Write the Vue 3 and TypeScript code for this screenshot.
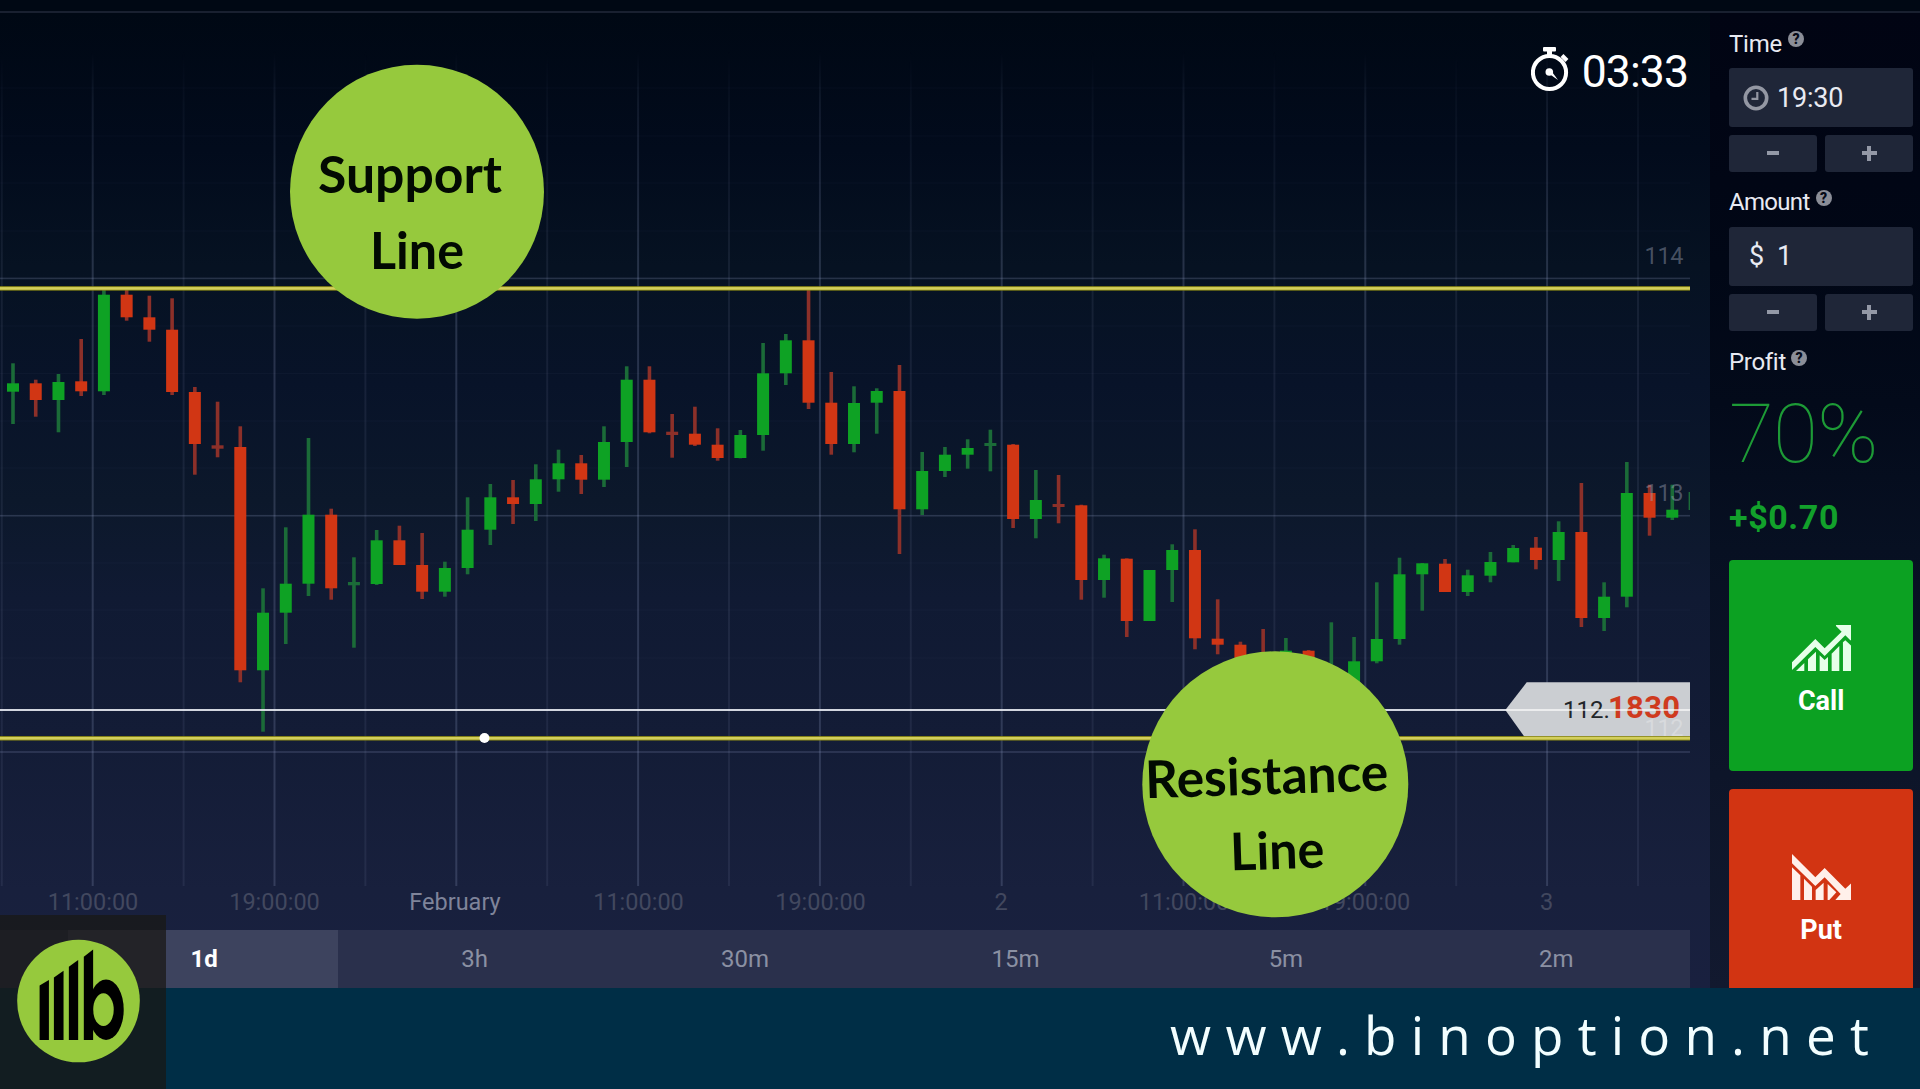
<template>
  <div class="screen">
    <div class="top-strip"></div>

    <div class="workspace">
      <!-- chart and timeframe tabs -->
      <section class="chart-column">
        <svg class="chart" viewBox="0 13 1710 917" width="1710" height="917" xmlns="http://www.w3.org/2000/svg">
          <defs>
            <linearGradient id="fade" x1="0" y1="50" x2="0" y2="260" gradientUnits="userSpaceOnUse">
              <stop offset="0" stop-color="#fff" stop-opacity="0" />
              <stop offset="0.25" stop-color="#fff" stop-opacity="0.45" />
              <stop offset="1" stop-color="#fff" stop-opacity="1" />
            </linearGradient>
            <mask id="grid-mask" maskUnits="userSpaceOnUse" x="0" y="13" width="1710" height="917">
              <rect x="0" y="13" width="1710" height="917" fill="url(#fade)" />
            </mask>
            <clipPath id="plot-clip">
              <rect x="0" y="13" width="1690" height="917" />
            </clipPath>
          </defs>

          <!-- grid -->
          <g mask="url(#grid-mask)">
            <rect v-for="x in minorX" :key="'mx' + x" :x="x - 1" y="50" width="2" height="836" class="grid-minor" />
            <rect v-for="x in majorX" :key="'x' + x" :x="x - 1" y="50" width="2" height="836" class="grid-major" />
          </g>
          <rect v-for="y in minorY" :key="'my' + y" x="0" :y="y - 0.5" width="1690" height="1" class="grid-faint" />
          <rect v-for="y in majorY" :key="'y' + y" x="0" :y="y - 0.8" width="1690" height="1.6" class="grid-major" />

          <!-- candles -->
          <g clip-path="url(#plot-clip)">
            <g v-for="(c, i) in candles" :key="i" :class="c[0] ? 'up' : 'down'">
              <rect class="wick" :x="candleX(i) - 1.8" :y="c[1]" width="3.6" :height="c[2] - c[1]" />
              <rect
                :class="c[4] - c[3] < 5 ? 'wick' : 'body'"
                :x="candleX(i) - 6"
                :y="c[3]"
                width="12"
                :height="c[4] - c[3]"
              />
            </g>
            <rect class="wick-last" x="1688.6" y="492" width="1.6" height="18" />
          </g>

          <!-- price scale -->
          <text x="1683" y="263.5" class="price-label">114</text>
          <text x="1683" y="500.5" class="price-label">113</text>

          <!-- time scale -->
          <text
            v-for="t in timeLabels"
            :key="t.x"
            :x="t.x"
            y="909.8"
            :class="['time-label', { strong: t.strong }]"
          >{{ t.text }}</text>

          <!-- current price -->
          <path d="M1505.3,710 L1526.7,682.3 H1690 V740 H1526.7 Z" fill="#cbced2" />
          <text x="1683" y="736" class="price-label ghost">112</text>
          <text x="1563" y="718.3" class="tag-int">112.</text>
          <text x="1608" y="718.3" class="tag-frac">1830</text>
          <rect x="0" y="709.1" width="1506" height="1.8" fill="#e8ebf2" />
          <rect x="1506" y="709.1" width="184" height="1.8" fill="#fff" fill-opacity="0.7" />

          <!-- levels -->
          <g v-for="y in levels" :key="'l' + y">
            <rect x="0" :y="y - 2.2" width="1690" height="4.4" fill="#8f8c14" />
            <rect x="0" :y="y - 1.3" width="1690" height="2.6" fill="#d3cf5c" />
          </g>
          <circle cx="484.5" cy="738" r="5" fill="#fff" />

          <!-- callouts -->
          <circle cx="417" cy="191.7" r="127" class="callout" />
          <text x="318" y="193" textLength="184" lengthAdjust="spacingAndGlyphs" class="callout-text">Support</text>
          <text x="370" y="269" textLength="94" lengthAdjust="spacingAndGlyphs" class="callout-text">Line</text>

          <circle cx="1275.3" cy="784.3" r="133" class="callout" />
          <g transform="rotate(-1.9 1275 800)">
            <text x="1146" y="794" textLength="243" lengthAdjust="spacingAndGlyphs" class="callout-text">Resistance</text>
            <text x="1228.5" y="869" textLength="94" lengthAdjust="spacingAndGlyphs" class="callout-text">Line</text>
          </g>
        </svg>

        <div class="timer">
          <svg class="timer-icon" viewBox="0 0 38 46" width="38" height="46">
            <circle cx="18.5" cy="26.5" r="16.6" fill="none" stroke="#fff" stroke-width="4" />
            <rect x="12" y="1" width="13" height="4.4" rx="1" fill="#fff" />
            <rect x="16" y="4" width="5" height="6" fill="#fff" />
            <path d="M31,9.5 L36,14.5" stroke="#fff" stroke-width="4" />
            <circle cx="18.3" cy="26" r="3.8" fill="#fff" />
            <path d="M17,27 L20,24.5 L27,34 Z" fill="#fff" />
          </svg>
          <span>03:33</span>
        </div>

        <nav class="tabs">
          <span class="tab-lead"></span>
          <button
            v-for="tab in tabs"
            :key="tab"
            :class="['tab', { active: tab === activeTab }]"
            @click="activeTab = tab"
          >{{ tab }}</button>
        </nav>
      </section>

      <!-- order panel -->
      <aside class="panel">
        <div class="label">Time<span class="help">?</span></div>
        <div class="field">
          <svg viewBox="0 0 26 26" width="26" height="26">
            <circle cx="13" cy="13" r="10.7" fill="none" stroke="#9397a3" stroke-width="3.6" />
            <path d="M14.3,7 V13.8 H8.5" fill="none" stroke="#9397a3" stroke-width="2.2" />
          </svg>
          <span class="time-value">{{ timeText }}</span>
        </div>
        <div class="steps">
          <button class="step" @click="minutes--"><i class="minus"></i></button>
          <button class="step" @click="minutes++"><i class="plus"></i></button>
        </div>

        <div class="label amount-label">Amount<span class="help">?</span></div>
        <div class="field money">
          <span>$</span>
          <span class="amount-value">{{ amount }}</span>
        </div>
        <div class="steps">
          <button class="step" @click="amount > 1 && amount--"><i class="minus"></i></button>
          <button class="step" @click="amount++"><i class="plus"></i></button>
        </div>

        <div class="label profit-label">Profit<span class="help">?</span></div>
        <div class="percent">{{ rate }}%</div>
        <div class="payout">+${{ payout }}</div>

        <button class="trade call">
          <svg viewBox="0 0 178 138" width="59.3" height="46" fill="#e6ffe9">
            <path d="M0,112 L70,42 L98,70 L149,20 L132,3 V0 H178 V46 H175 L160,31 L98,93 L70,66 L0,135 Z" />
            <path d="M12,138 L37,114 V138 Z" />
            <path d="M48,103 L72,80 V138 H48 Z" />
            <path d="M83,91 L98,105 L108,96 V138 H83 Z" />
            <path d="M119,86 L142,63 V138 H119 Z" />
            <path d="M153,52 L160,46 L178,62 V138 H153 Z" />
          </svg>
          <span>Call</span>
        </button>
        <button class="trade put">
          <svg viewBox="0 0 178 138" width="59.3" height="46" fill="#fff0ea">
            <path d="M0,0 L70,70 L98,42 L160,104 L178,88 V138 H130 L146,120 L98,70 L70,96 L0,28 Z" />
            <path d="M0,40 L25,64 V138 H0 Z" />
            <path d="M36,74 L60,98 V138 H36 Z" />
            <path d="M71,108 L95,86 V138 H71 Z" />
            <path d="M107,90 L133,115 L112,138 H107 Z" />
          </svg>
          <span>Put</span>
        </button>
      </aside>
    </div>

    <footer class="footer">www.binoption.net</footer>

    <div class="brand">
      <svg viewBox="0 0 370 372" width="123" height="124">
        <circle cx="185" cy="186" r="184.5" fill="#96c93d" />
        <ellipse cx="268" cy="212" rx="53" ry="91" fill="#000" />
        <ellipse cx="260" cy="212" rx="31" ry="49" fill="#96c93d" />
        <path d="M68,139 L96,123 V303 H68 Z" />
        <path d="M111,115 L140,95 V303 H111 Z" />
        <path d="M156,83 L184,63 V303 H156 Z" />
        <path d="M201,53 L229,31 V303 H201 Z" />
      </svg>
    </div>
  </div>
</template>

<script setup lang="ts">
import { ref, computed } from 'vue'

// [rising, high, low, body top, body bottom]
type Candle = [number, number, number, number, number]

const candles: Candle[] = [
  [1, 363.3, 424, 383.3, 391.7],
  [0, 379.7, 416.7, 383.3, 400],
  [1, 374, 432.3, 382, 400],
  [0, 339, 396, 381.3, 391.3],
  [1, 290, 395, 294.7, 391.3],
  [0, 290, 320.7, 294.7, 317.3],
  [0, 295.7, 341.7, 317.3, 329.7],
  [0, 298.3, 395, 329.7, 392],
  [0, 387, 474.7, 392, 444],
  [0, 401.7, 457.3, 445.3, 448.7],
  [0, 426.3, 682.3, 447, 670.3],
  [1, 588.3, 731.7, 612.7, 670.3],
  [1, 527.3, 644, 583.7, 612.7],
  [1, 438, 596, 514.7, 583.7],
  [0, 508.7, 599.7, 514.7, 588.3],
  [1, 557.3, 647.7, 582, 585.3],
  [1, 530, 585, 540.3, 584],
  [0, 525.7, 565, 540.3, 565],
  [0, 533, 599, 565, 591.7],
  [1, 561.7, 596.7, 568, 591.7],
  [1, 497.3, 574.3, 529.7, 568],
  [1, 484, 545, 497.3, 529.7],
  [0, 480, 524, 497.3, 504],
  [1, 464.3, 521, 479.3, 504],
  [1, 449.7, 491.7, 463.3, 479.3],
  [0, 455, 494, 463.3, 479.7],
  [1, 426.3, 487, 442, 479.7],
  [1, 366.3, 467, 379.7, 442],
  [0, 366.3, 433.3, 379.7, 432.3],
  [0, 414, 457.7, 431.7, 435],
  [0, 406.7, 446, 433.7, 444.7],
  [0, 428.3, 460.7, 444.7, 458],
  [1, 430, 458.3, 435, 458],
  [1, 343, 450.7, 373.3, 435],
  [1, 334, 385, 340.3, 373.3],
  [0, 290, 409, 340.3, 402.7],
  [0, 372, 454.7, 402.7, 444],
  [1, 386.3, 452.3, 403, 444],
  [1, 388.3, 433.7, 391, 402.7],
  [0, 365, 554, 391, 509.3],
  [1, 452, 515, 471, 509.3],
  [1, 447, 477, 454.7, 471],
  [1, 439.3, 468.7, 448, 454.7],
  [1, 429.7, 471.3, 443, 446],
  [0, 444, 528, 444.7, 519],
  [1, 470, 538.3, 500, 519],
  [0, 475, 523.3, 504, 507],
  [0, 504.7, 599.7, 505.3, 580],
  [1, 554.7, 597.7, 558.3, 580],
  [0, 558.3, 637, 558.7, 621],
  [1, 570, 621, 570, 621],
  [1, 544.3, 602, 550, 570],
  [0, 529.3, 649.3, 550, 638.3],
  [0, 599.3, 654.3, 638.7, 644.7],
  [0, 641.7, 675, 644.7, 670],
  [0, 629, 680, 665, 675],
  [1, 638, 670, 650.7, 665],
  [0, 650, 680, 650.7, 680],
  [1, 622.3, 700, 678, 695],
  [1, 637, 690, 661.3, 688],
  [1, 582.3, 663.3, 639, 661.3],
  [1, 557.7, 644.7, 574.3, 639],
  [1, 563, 610.7, 563.3, 574.3],
  [0, 559, 592, 563.7, 592],
  [1, 569.7, 596, 575.3, 592],
  [1, 552, 582.3, 562, 575.7],
  [1, 545, 562.3, 548, 562.3],
  [0, 537, 569.3, 547.7, 560],
  [1, 521.3, 581, 532, 560],
  [0, 483, 627, 532, 618],
  [1, 582.3, 631, 596.7, 618],
  [1, 462, 607.3, 493, 596.7],
  [0, 484.7, 535.7, 493, 517.7],
  [1, 484.7, 520, 509.7, 517.7]
]

const candleX = (i: number) => 13 + i * 22.73

// grid positions
const majorX = Array.from({ length: 9 }, (_, i) => 92.7 + i * 181.8)
const minorX = Array.from({ length: 10 }, (_, i) => 1.8 + i * 181.8)
const majorY = [278.4, 515.7, 752]
const minorY = [88, 136, 183, 231, 326, 373.5, 421, 468, 563, 610, 658]

const levels = [288.4, 738.3]

const timeLabels = [
  { x: 93, text: '11:00:00' },
  { x: 274.5, text: '19:00:00' },
  { x: 455, text: 'February', strong: true },
  { x: 638.5, text: '11:00:00' },
  { x: 820.5, text: '19:00:00' },
  { x: 1001, text: '2' },
  { x: 1184, text: '11:00:00' },
  { x: 1365, text: '19:00:00' },
  { x: 1546.5, text: '3' }
]

const tabs = ['1d', '3h', '30m', '15m', '5m', '2m']
const activeTab = ref('1d')

// order form
const minutes = ref(19 * 60 + 30)
const amount = ref(1)
const rate = ref(70)

const timeText = computed(() => {
  const h = Math.floor(minutes.value / 60) % 24
  const m = minutes.value % 60
  return `${String(h).padStart(2, '0')}:${String(m).padStart(2, '0')}`
})
const payout = computed(() => ((amount.value * rate.value) / 100).toFixed(2))
</script>

<style>
body {
  margin: 0;
  background: #000814;
}
</style>

<style scoped>
.screen {
  position: relative;
  display: flex;
  flex-direction: column;
  width: 1920px;
  height: 1089px;
  overflow: hidden;
  font-family: Roboto, 'Liberation Sans', sans-serif;
  color: #e8eaf2;
}
button {
  padding: 0;
  border: 0;
  font-family: inherit;
  cursor: pointer;
}
.top-strip {
  box-sizing: border-box;
  flex: 0 0 13px;
  background: #000814;
  border-bottom: 2px solid #192030;
}
.workspace {
  display: flex;
  flex: 0 0 975px;
  overflow: hidden;
}

/* chart */
.chart-column {
  position: relative;
  display: flex;
  flex-direction: column;
  width: 1710px;
  background: linear-gradient(#000814 0%, #020b1c 14%, #061222 26%, #081329 38%, #0c182b 50%, #101a33 60%, #131c36 74%, #18203d 90%, #19203f 100%);
}
.chart {
  display: block;
}
.grid-major {
  fill: #8f9bc0;
  fill-opacity: 0.24;
}
.grid-minor {
  fill: #8f9bc0;
  fill-opacity: 0.11;
}
.grid-faint {
  fill: #8f9bc0;
  fill-opacity: 0.04;
}
.up .body {
  fill: #0ea224;
}
.up .wick,
.wick-last {
  fill: #1b6b38;
}
.down .body {
  fill: #d13614;
}
.down .wick {
  fill: #8c3029;
}
.price-label {
  font-size: 23.5px;
  letter-spacing: -0.4px;
  text-anchor: end;
  fill: #9aa0b4;
  fill-opacity: 0.45;
}
.price-label.ghost {
  fill: #fff;
  fill-opacity: 0.25;
}
.time-label {
  font-size: 23.5px;
  text-anchor: middle;
  fill: #42485f;
}
.time-label.strong {
  fill: #7f849a;
}
.tag-int {
  font-size: 24px;
  fill: #222529;
}
.tag-frac {
  font-size: 31px;
  font-weight: 700;
  letter-spacing: 0.3px;
  fill: #cf3a1e;
}
.callout {
  fill: #96c93d;
}
.callout-text {
  font-family: Lato, 'Open Sans', sans-serif;
  font-size: 52px;
  font-weight: 700;
  fill: #020a02;
}
.timer {
  position: absolute;
  top: 32px;
  right: 22px;
  display: flex;
  align-items: center;
  gap: 13px;
  height: 48px;
  font-size: 44.5px;
  line-height: 48px;
  letter-spacing: -0.9px;
  color: #fff;
}
.timer span {
  padding-top: 6px;
}

/* timeframe tabs */
.tabs {
  display: flex;
  width: 1690px;
  height: 58px;
  background: #2a304c;
}
.tab-lead {
  width: 67.5px;
}
.tab {
  flex: 1;
  padding-left: 3px;
  background: none;
  font-size: 24px;
  color: #8b90a3;
}
.tab.active {
  background: #3d435e;
  font-weight: 700;
  color: #fff;
}

/* order panel */
.panel {
  box-sizing: border-box;
  display: flex;
  flex-direction: column;
  width: 210px;
  padding: 15.5px 6.7px 0 19px;
  background: linear-gradient(#010413 0%, #010716 26%, #030a1a 40%, #071022 55%, #0d1529 78%, #12192f 100%);
}
.label {
  display: flex;
  align-items: flex-start;
  gap: 6px;
  height: 30px;
  margin-bottom: 9.7px;
  font-size: 24px;
  line-height: 30px;
  letter-spacing: -0.2px;
}
.amount-label {
  letter-spacing: -0.7px;
}
.help {
  width: 16px;
  height: 16px;
  margin-top: 2.5px;
  border-radius: 50%;
  background: #8b8e98;
  color: #050a18;
  font-size: 14px;
  font-weight: 900;
  line-height: 16.5px;
  letter-spacing: 0;
  text-align: center;
}
.field {
  box-sizing: border-box;
  display: flex;
  align-items: center;
  flex: 0 0 58.7px;
  padding-left: 14px;
  border-radius: 3px;
  background: #1f2638;
  font-size: 27px;
  letter-spacing: -0.2px;
}
.time-value {
  padding-left: 8px;
}
.money {
  padding-left: 20px;
}
.amount-value {
  padding-left: 13px;
}
.steps {
  display: flex;
  flex: 0 0 37px;
  gap: 8px;
  margin: 8px 0 15.4px;
}
.step {
  display: flex;
  flex: 1;
  align-items: center;
  justify-content: center;
  border-radius: 3px;
  background: #1f2638;
}
.minus {
  width: 12.5px;
  height: 4px;
  background: #9398a6;
}
.plus {
  width: 15px;
  height: 15px;
  background:
    linear-gradient(#9398a6, #9398a6) center / 15px 4px no-repeat,
    linear-gradient(#9398a6, #9398a6) center / 4px 15px no-repeat;
}
.profit-label {
  gap: 5px;
  padding-top: 1px;
  letter-spacing: -0.3px;
}
.percent {
  height: 80px;
  margin-top: 7px;
  font-size: 82px;
  font-weight: 100;
  line-height: 80px;
  letter-spacing: -0.8px;
  color: #1d9a36;
}
.payout {
  height: 40px;
  margin: 23px 0 23.6px;
  font-size: 34px;
  font-weight: 700;
  line-height: 40px;
  letter-spacing: 0.6px;
  color: #12a12b;
}
.trade {
  display: flex;
  flex: 0 0 210.7px;
  flex-direction: column;
  align-items: center;
  box-sizing: border-box;
  padding-top: 65px;
  border-radius: 4px;
  color: #fff;
  font-size: 27px;
  font-weight: 700;
  line-height: 32px;
}
.trade span {
  margin-top: 14px;
}
.call {
  margin-bottom: 18.3px;
  background: #0ca122;
}
.put {
  background: #d23412;
}

/* bottom banner */
.footer {
  flex: 1;
  padding-right: 37px;
  background: #002e46;
  font-family: 'Open Sans', 'Noto Sans', sans-serif;
  font-size: 53px;
  line-height: 94px;
  letter-spacing: 14.2px;
  text-align: right;
  color: #f2feff;
}
.brand {
  position: absolute;
  left: 0;
  bottom: 0;
  box-sizing: border-box;
  width: 166px;
  height: 174px;
  padding: 24px 0 0 17px;
  background: rgba(25, 24, 20, 0.72);
}
</style>
